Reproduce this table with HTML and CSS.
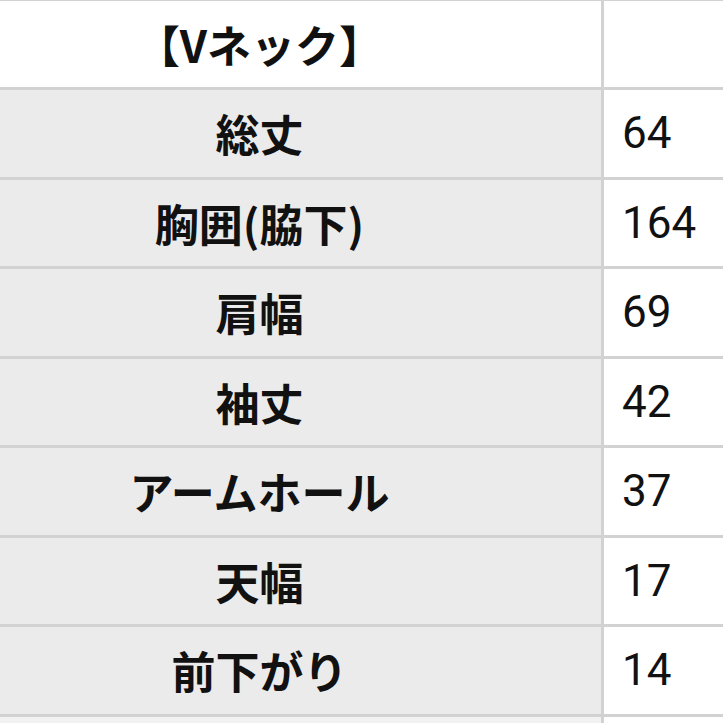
FILE: index.html
```html
<!DOCTYPE html>
<html lang="ja">
<head>
<meta charset="utf-8">
<link rel="stylesheet" href="styles.css">
</head>
<body>
<div class="sheet">
  <div class="cell label head">【Vネック】</div><div class="cell value head"></div>
  <div class="cell label">総丈</div><div class="cell value">64</div>
  <div class="cell label">胸囲(脇下)</div><div class="cell value">164</div>
  <div class="cell label">肩幅</div><div class="cell value">69</div>
  <div class="cell label">袖丈</div><div class="cell value">42</div>
  <div class="cell label">アームホール</div><div class="cell value">37</div>
  <div class="cell label">天幅</div><div class="cell value">17</div>
  <div class="cell label">前下がり</div><div class="cell value">14</div>
  <div class="cell label blank"></div><div class="cell value"></div>
</div>
</body>
</html>
```

FILE: styles.css
```css
html, body {
  margin: 0;
  padding: 0;
  background: #ffffff;
  overflow: hidden;
}
.sheet {
  display: grid;
  grid-template-columns: 601px 119px;
  grid-template-rows: 86px repeat(7, 86.5px) 6px;
  gap: 3px;
  border-top: 1px solid #d2d2d2;
  background: #d2d2d2;
  width: 723px;
}
.cell {
  display: flex;
  align-items: center;
  color: #111111;
  font-size: 44px;
  overflow: hidden;
}
.label {
  background: #ebebeb;
  justify-content: center;
  padding-right: 82px;
  font-family: "Noto Sans CJK JP", "Noto Sans", sans-serif;
  font-weight: 700;
}
.value {
  background: #ffffff;
  padding-left: 18px;
  font-family: Roboto, "Noto Sans", sans-serif;
  font-weight: 400;
}
.head {
  background: #ffffff;
}
.label.blank {
  background: #f2f2f2;
}
```
